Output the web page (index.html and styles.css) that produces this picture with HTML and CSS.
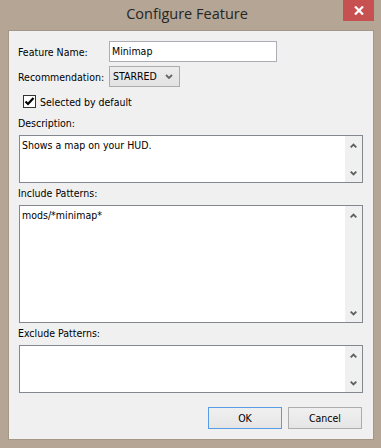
FILE: index.html
```html
<!DOCTYPE html>
<html>
<head>
<title>Configure Feature</title>
<link rel="stylesheet" href="styles.css">
</head>
<body>

<div class="window">
	<div class="titlebar">
		<span class="title">Configure Feature</span>
		<div class="close">
			<svg width="10" height="9" viewBox="0 0 10 9"><path d="M1 0.5 L9 8.5 M9 0.5 L1 8.5" stroke="#fff" stroke-width="2.2"/></svg>
		</div>
	</div><!-- end titlebar -->

	<div class="client">
		<div class="row first">
			<span class="lbl">Feature Name:</span>
			<div class="textbox">Minimap</div>
		</div>
		<div class="row">
			<span class="lbl">Recommendation:</span>
			<div class="combo">STARRED
				<svg width="8" height="5" viewBox="0 0 8 5"><path d="M1 1 L4 4 L7 1" fill="none" stroke="#666" stroke-width="1.8"/></svg>
			</div>
		</div>

		<div class="check-row">
			<span class="checkbox"><svg width="11" height="11" viewBox="0 0 11 11"><path d="M1.5 5.5 L4 8 L9.5 2" fill="none" stroke="#000" stroke-width="2.2"/></svg></span>
			Selected by default
		</div>

		<div class="field-label">Description:</div>
		<div class="memo short">
			<div class="memo-text">Shows a map on your HUD.</div>
			<div class="vscroll">
				<svg class="arrow" width="7" height="5" viewBox="0 0 7 5"><path d="M0.7 4.3 L3.5 1.5 L6.3 4.3" fill="none" stroke="#606060" stroke-width="1.9"/></svg>
				<svg class="arrow" width="7" height="5" viewBox="0 0 7 5"><path d="M0.7 0.7 L3.5 3.5 L6.3 0.7" fill="none" stroke="#606060" stroke-width="1.9"/></svg>
			</div>
		</div>

		<div class="field-label">Include Patterns:</div>
		<div class="memo tall">
			<div class="memo-text">mods/*minimap*</div>
			<div class="vscroll">
				<svg class="arrow" width="7" height="5" viewBox="0 0 7 5"><path d="M0.7 4.3 L3.5 1.5 L6.3 4.3" fill="none" stroke="#606060" stroke-width="1.9"/></svg>
				<svg class="arrow" width="7" height="5" viewBox="0 0 7 5"><path d="M0.7 0.7 L3.5 3.5 L6.3 0.7" fill="none" stroke="#606060" stroke-width="1.9"/></svg>
			</div>
		</div>

		<div class="field-label">Exclude Patterns:</div>
		<div class="memo short">
			<div class="memo-text"></div>
			<div class="vscroll">
				<svg class="arrow" width="7" height="5" viewBox="0 0 7 5"><path d="M0.7 4.3 L3.5 1.5 L6.3 4.3" fill="none" stroke="#606060" stroke-width="1.9"/></svg>
				<svg class="arrow" width="7" height="5" viewBox="0 0 7 5"><path d="M0.7 0.7 L3.5 3.5 L6.3 0.7" fill="none" stroke="#606060" stroke-width="1.9"/></svg>
			</div>
		</div>

		<div class="buttons">
			<button class="btn default">OK</button>
			<button class="btn">Cancel</button>
		</div>
	</div><!-- end client -->
</div><!-- end window -->

</body>
</html>
```

FILE: styles.css
```css
body {
margin: 0;
background: #b4a594;
font-family: "DejaVu Sans Condensed", "Liberation Sans", sans-serif;
font-size: 10.5px;
color: #000;
}

.window {
width: 381px;
height: 448px;
box-sizing: border-box;
background: #b4a594;
padding: 0 7px 8px 8px;
}

.titlebar {
height: 30px;
display: grid;
grid-template-columns: 1fr auto 1fr;
align-items: start;
margin: 0 -7px 0 -8px;
padding-right: 7px;
}

.title {
grid-column: 2;
font-family: "Open Sans", sans-serif;
font-size: 14.5px;
color: #262626;
line-height: 30px;
margin-top: -1px;
}

.close {
grid-column: 3;
justify-self: end;
width: 31px;
height: 21px;
background: #c75050;
display: flex;
align-items: center;
justify-content: center;
}

.client {
width: 366px;
height: 410px;
box-sizing: border-box;
border: 1px solid #a59785;
background: #f0f0f0;
padding: 0 10px;
display: flex;
flex-direction: column;
}

.row {
display: flex;
align-items: center;
margin-top: 4px;
}
.row.first {
margin-top: 10px;
}

.lbl {
width: 90px;
margin-left: -1px;
}

.textbox {
width: 168px;
height: 21px;
box-sizing: border-box;
border: 1px solid #abadb3;
background: #fff;
padding: 0 2px;
line-height: 19px;
margin-left: 1px;
}

.combo {
width: 71px;
height: 21px;
box-sizing: border-box;
border: 1px solid #acacac;
background: linear-gradient(#ececec, #e3e3e3);
padding: 0 6px 0 3px;
line-height: 19px;
margin-left: 1px;
display: flex;
align-items: center;
justify-content: space-between;
}

.check-row {
display: flex;
align-items: center;
margin-top: 8px;
margin-left: 4px;
height: 13px;
gap: 4px;
}

.checkbox {
width: 13px;
height: 13px;
box-sizing: border-box;
border: 1px solid #333;
background: #fff;
display: flex;
align-items: center;
justify-content: center;
}

.field-label {
line-height: 13px;
height: 13px;
margin-top: 9px;
margin-left: -1px;
}
.memo + .field-label {
margin-top: 4px;
}

.memo {
margin-top: 5px;
width: 344px;
box-sizing: border-box;
border: 1px solid #828790;
background: #fff;
display: flex;
}
.memo.short {
height: 48px;
}
.memo.tall {
height: 118px;
}

.memo-text {
flex: 1;
padding: 3px 2px;
line-height: 13px;
}

.vscroll {
width: 17px;
background: #f0f0f0;
display: flex;
flex-direction: column;
justify-content: space-between;
align-items: center;
padding: 7px 0 6px;
box-sizing: border-box;
}

.buttons {
display: flex;
justify-content: flex-end;
gap: 6px;
margin-top: 14px;
margin-right: 1px;
}

.btn {
width: 74px;
height: 22px;
box-sizing: border-box;
border: 1px solid #adadad;
background: linear-gradient(#f0f0f0, #e5e5e5);
font-family: "DejaVu Sans Condensed", "Liberation Sans", sans-serif;
font-size: 10.5px;
color: #000;
padding: 0;
}
.btn.default {
border-color: #569de5;
}
```
